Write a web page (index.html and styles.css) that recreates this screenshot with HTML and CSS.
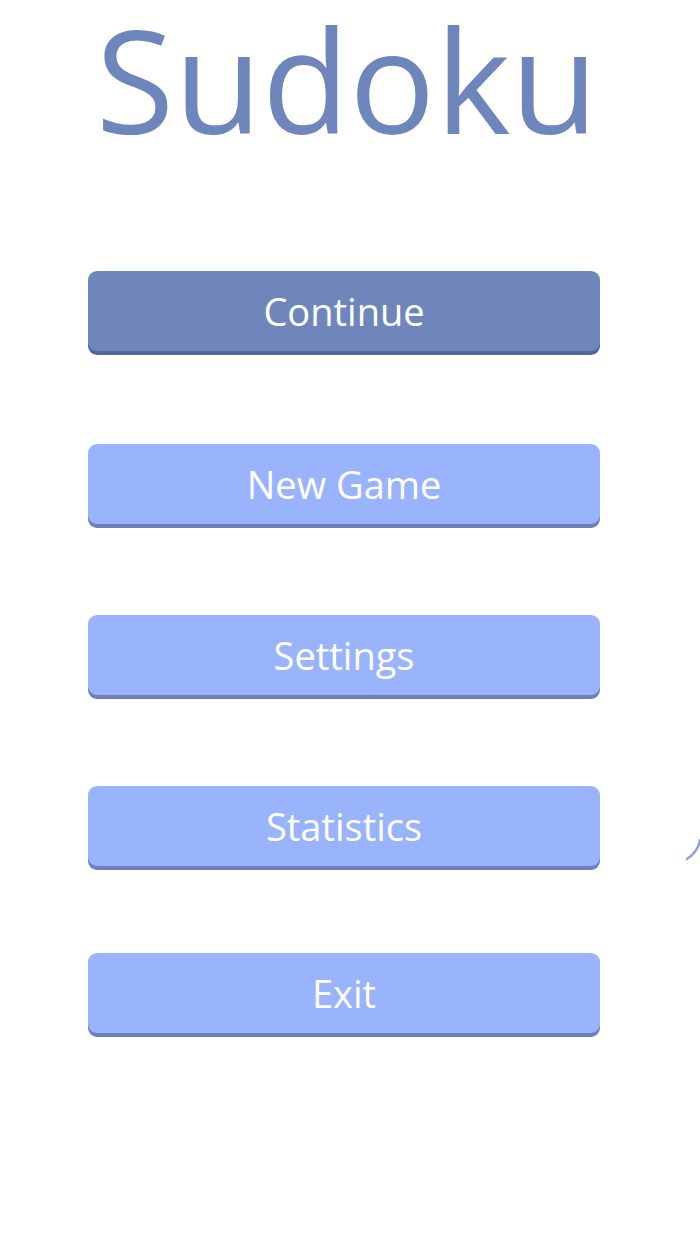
FILE: index.html
```html
<!DOCTYPE html>
<html>
<head>
<meta charset="utf-8">
<link rel="stylesheet" href="styles.css">
</head>
<body>
<div class="screen">
  <div class="head">
    <h1 class="title">Sudoku</h1>
  </div>
  <div class="menu">
    <div class="btn btn-primary b1">Continue</div>
    <div class="btn b2">New Game</div>
    <div class="btn b3">Settings</div>
    <div class="btn b4">Statistics</div>
    <div class="btn b5">Exit</div>
  </div>
  <svg class="arc" width="20" height="30" viewBox="0 0 20 30"><path d="M16 2 Q14 14 3 21" fill="none" stroke="#8ea3dc" stroke-width="2.5" stroke-linecap="round"/></svg>
</div>
</body>
</html>
```
FILE: styles.css
```css
html, body { margin: 0; padding: 0; background: #fff; }
.screen {
  position: relative;
  width: 700px;
  height: 1244px;
  overflow: hidden;
  font-family: "Open Sans", "Noto Sans", sans-serif;
}
.head {
  display: flow-root;
  height: 271px;
}
.title {
  margin: -19px 0 0 0;
  padding-right: 6px;
  text-align: center;
  color: #6f86bd;
  font-weight: 500;
  font-size: 143px;
  line-height: normal;
}
.menu {
  display: flex;
  flex-direction: column;
  padding-left: 88px;
}
.btn {
  width: 512px;
  height: 80px;
  box-sizing: border-box;
  border-radius: 9px;
  background: #99b3fd;
  box-shadow: 0 4px 0 #6f80b8;
  color: #fff;
  font-size: 38px;
  font-weight: 500;
  line-height: 80px;
  text-align: center;
}
.btn-primary { background: #6f86bd; box-shadow: 0 4px 0 #55679a; }
.b2 { margin-top: 93px; }
.b3 { margin-top: 91px; }
.b4 { margin-top: 91px; }
.b5 { margin-top: 87px; }
.arc { position: absolute; left: 684px; top: 838px; }
```
